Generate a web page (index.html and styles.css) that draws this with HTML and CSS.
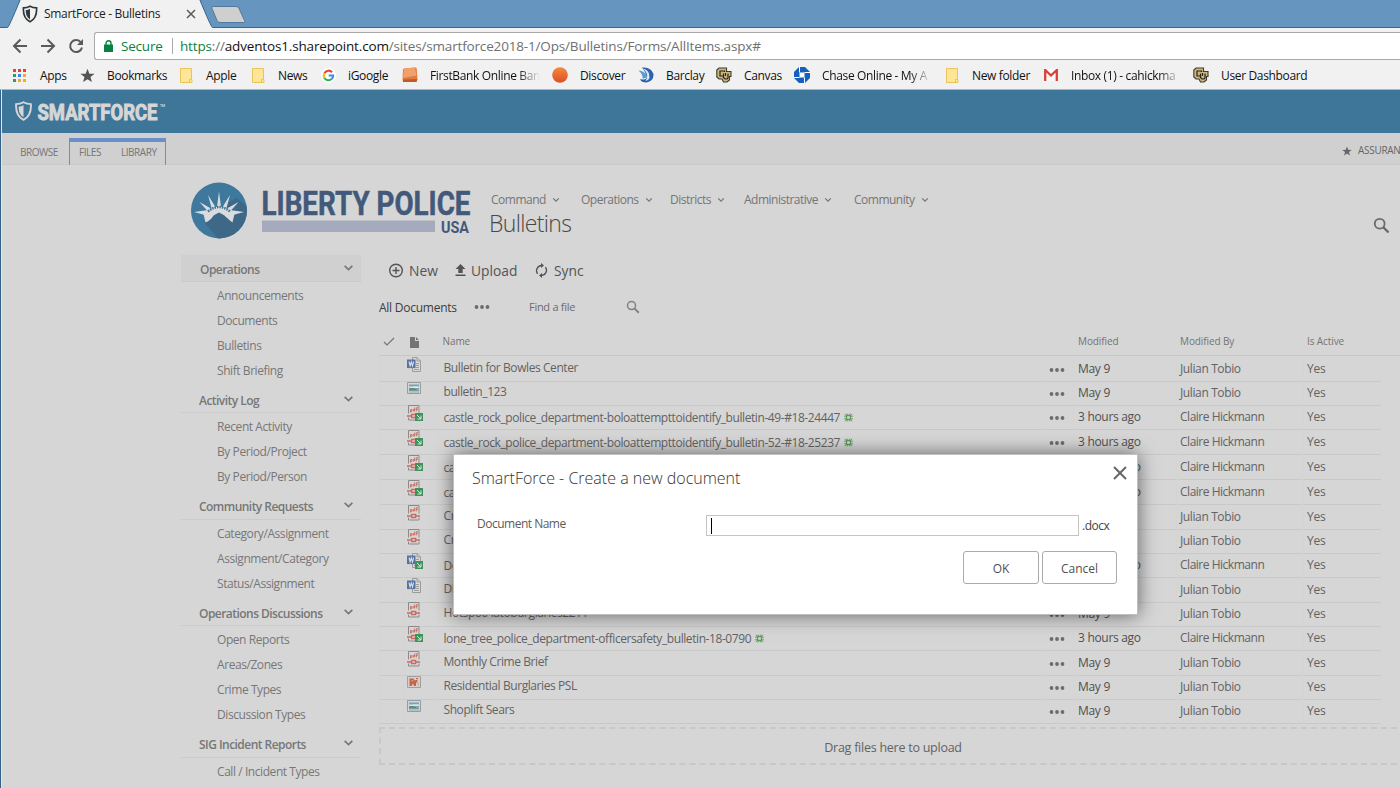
FILE: index.html
```html
<!DOCTYPE html>
<html lang="en">
<head>
<meta charset="utf-8">
<title>SmartForce - Bulletins</title>
<link rel="stylesheet" href="styles.css">
</head>
<body>
<svg class="defs" width="0" height="0" aria-hidden="true">
  <symbol id="chev" viewBox="0 0 10 7"><path d="M1.500 1.500 5 5l3.500-3.500" fill="none" stroke="currentColor" stroke-width="1.500"/></symbol>
  <symbol id="star" viewBox="0 0 16 16"><path d="M8 .8l2 5.200 5.600.2-4.400 3.400L12.700 15 8 11.900 3.300 15l1.500-5.400L.4 6.200 6 6z" fill="currentColor"/></symbol>
  <symbol id="shield" viewBox="0 0 18 20"><path d="M9 1.200c2.300 1.400 4.600 1.900 7.400 1.900.5 8-1.600 12.700-7.400 15.700C3.200 15.800 1.100 11.100 1.600 3.100 4.400 3.100 6.700 2.600 9 1.200z" fill="none" stroke="currentColor" stroke-width="1.900"/><path d="M9 4v12.200C5.400 13.800 4 10.600 4.200 5.600 6.100 5.500 7.600 5 9 4z" fill="currentColor"/></symbol>
  <symbol id="search" viewBox="0 0 16 16"><circle cx="6.300" cy="6.300" r="4.600" fill="none" stroke="currentColor" stroke-width="1.700"/><path d="M9.600 9.600l5 5" stroke="currentColor" stroke-width="2.200"/></symbol>
  <symbol id="dots" viewBox="0 0 16 6"><circle cx="2.500" cy="3" r="1.900" fill="currentColor"/><circle cx="8" cy="3" r="1.900" fill="currentColor"/><circle cx="13.500" cy="3" r="1.900" fill="currentColor"/></symbol>
  <symbol id="folder" viewBox="0 0 13 15"><path d="M.5.500h11v11h.5v3H.5z" fill="#ffe596" stroke="#e8c55b"/><path d="M9.500 14.500v-3h2" fill="none" stroke="#e8c55b"/></symbol>
  <symbol id="cu" viewBox="0 0 16 16"><path d="M3 1h7.500v3.500H15v5h-1.500V13L11 15H7.500L6 12H3L.8 10V3z" fill="#cdb87c" stroke="#3b3a36" stroke-width="1.100"/><path d="M8.500 5V4H4v5h3M7.500 6.500v4L9 12h2l1-1V6.500M9.500 6v3" fill="none" stroke="#24221f" stroke-width="1.200"/></symbol>
  <symbol id="word" viewBox="0 0 16 17"><path d="M5.500 1.500H10l3.500 3.500V15.500h-8z" fill="#dadada" stroke="#9a9b9b"/><path d="M10 1.500v3.500h3.500M9 7.500h3M9 9.500h3M9 11.500h3M7 13.500h5" fill="none" stroke="#9a9b9b"/><path d="M0 3.500h8.500v8.600H0z" fill="#5572a2"/><path d="M2 5.500l1.100 4.500L4.300 6l1.200 4L6.600 5.500" fill="none" stroke="#d7dce5" stroke-width="1.100"/></symbol>
  <symbol id="pic" viewBox="0 0 16 17"><path d="M.5 2.500h13v11H.5z" fill="#d3d6d8" stroke="#979ca0"/><path d="M2 4.500h10v5H2z" fill="#7da0b4"/><path d="M2 9.500c2-3.500 4-2.500 6-.8 1.500 1 3 1 4 1v1H2z" fill="#5c8f7c"/><path d="M2 6.500c3 .5 4-1 10 0v1.500c-4-.4-6 .5-10-.2z" fill="#dfe5e8"/><path d="M2 12h10" stroke="#a0a5a8"/></symbol>
  <symbol id="pdf" viewBox="0 0 16 17"><path d="M1.500 9.500V1.500h10.500v8M1.500 13.500v2.500h10.500v-2.500" fill="none" stroke="#8a8a8a"/><path d="M3.500 8.500v-3h1.300v2H3M7.700 3.500V7H6.100V5.500h1.600M9.300 7.500V3.700H11M9 5.300h2" fill="none" stroke="#cf7266" stroke-width="1"/><path d="M0 12h4M9 12h4M4.600 10.500h4v3h-4z" fill="none" stroke="#cc6a5e" stroke-width="1.400"/></symbol>
  <symbol id="ppt" viewBox="0 0 16 17"><path d="M.5 2.500h13v11H.5z" fill="#d6d0cc" stroke="#a0a0a0"/><path d="M2.500 12V4.500h4l1 2 3-1v2L9 9v3H7L6 9.500 4.500 12zM9 4h2v1H9z" fill="#c8624a"/><path d="M4.500 6h1.500v1.500H4.500zM10 8.500h1.500V10H10zM11 10.500h1V12h-1z" fill="#dca06a"/></symbol>
  <symbol id="out" viewBox="0 0 8 8"><path d="M0 0h8v8H0z" fill="#3f9259"/><path d="M2 2l3.800 3.800M6 2.500V6H2.500" fill="none" stroke="#dcebe0"/></symbol>
  <symbol id="new" viewBox="0 0 9 9"><path d="M.8.800l2 2M8.200.800l-2 2M.8 8.200l2-2M8.200 8.200l-2-2M0 3.200h2M0 5.800h2M7 3.200h2M7 5.800h2M3.200.500v2M5.800.500v2M3.200 6.500v2M5.800 6.500v2" stroke="#6aa566" stroke-width="1"/><path d="M2.500 2.500h4v4h-4z" fill="none" stroke="#5c9a58" stroke-width="1.300"/></symbol>
</svg>

<div class="window">
  <header class="chrome">
    <div class="tabstrip">
      <svg class="tabshape" width="250" height="28" viewBox="0 0 250 28"><path d="M0 28V27.500H7.500Q9 27 20.500-1H199.500Q211 27 212.500 27.500H250V28z" fill="#f1f1f1"/><path d="M0 27.500H7.500Q9 27 20.500-1M199.500-1Q211 27 212.500 27.500H250" fill="none" stroke="#3b648a"/><path d="M213 6.500h23q2 0 3 2l5.500 12q1 2-1 2H220q-2 0-3-2l-5-12q-1-2 1-2z" fill="#cfcfcf" stroke="#54789a"/></svg>
      <div class="tab">
        <svg class="fav" width="16" height="18"><use href="#shield"/></svg>
        <span class="tab-title">SmartForce - Bulletins</span>
        <svg width="10" height="10" viewBox="0 0 10 10"><path d="M1 1l8 8M9 1L1 9" stroke="#5a5a5a" stroke-width="1.500"/></svg>
      </div>
    </div>
    <div class="toolbar">
      <svg width="72" height="16" viewBox="0 0 72 16" fill="none" stroke="#5a5a5a" stroke-width="2"><path d="M15 8H2M8.500 1.500L2 8l6.500 6.500M29 8H42M35.500 1.500L42 8l-6.500 6.500"/><path d="M69 4.500A6 6 0 1 0 70 9.500"/><path d="M71 1v6h-6z" fill="#5a5a5a" stroke="none"/></svg>
      <div class="address">
        <svg width="9" height="12" viewBox="0 0 9 12"><path d="M0 4.500h9V12H0z" fill="#0b8043"/><path d="M2 5V3.200a2.500 2.500 0 0 1 5 0V5" fill="none" stroke="#0b8043" stroke-width="1.400"/></svg>
        <span class="secure">Secure</span>
        <span class="url"><b>https</b><i>://</i>adventos1.sharepoint.com<i>/sites/smartforce2018-1/Ops/Bulletins/Forms/AllItems.aspx#</i></span>
      </div>
    </div>
    <nav class="bookmarks">
      <div class="bm w67"><svg width="13" height="13" viewBox="0 0 13 13"><path d="M0 0h3v3H0zM5 0h3v3H5zM10 0h3v3h-3z" fill="#ea3f34"/><path d="M0 5h3v3H0z" fill="#2ba05a"/><path d="M5 5h3v3H5z" fill="#3f83ee"/><path d="M10 5h3v3h-3zM5 10h3v3H5zM10 10h3v3h-3z" fill="#f4ab24"/><path d="M0 10h3v3H0z" fill="#2ba05a"/></svg><span>Apps</span></div>
      <div class="bm w100"><svg class="dark" width="15" height="15"><use href="#star"/></svg><span>Bookmarks</span></div>
      <div class="bm w72 t26"><svg width="13" height="15"><use href="#folder"/></svg><span>Apple</span></div>
      <div class="bm w69 t26"><svg width="13" height="15"><use href="#folder"/></svg><span>News</span></div>
      <div class="bm w81"><svg width="15" height="15" viewBox="0 0 16 16"><circle cx="8" cy="8" r="8" fill="#fff"/><g fill="none" stroke-width="2.200"><path d="M11.800 4.500A5 5 0 0 0 3.600 5.600" stroke="#ea4335"/><path d="M3.600 5.600a5 5 0 0 0 .1 5" stroke="#fbbc05"/><path d="M3.700 10.600a5 5 0 0 0 7.600 1.200" stroke="#34a853"/><path d="M11.300 11.800A5 5 0 0 0 13 8H8.200" stroke="#4285f4"/></g></svg><span>iGoogle</span></div>
      <div class="bm w150 t28"><svg width="16" height="16" viewBox="0 0 16 16"><path d="M2 1.500L13 .5q1.500 0 1.700 1l.8 11-1 2.500H1L.5 12 1 2.500z" fill="#e47a3a"/><path d="M2 1.500l11-1 1.500 8L1 11z" fill="#efa06c"/><path d="M1 12.500l14-.5-.5 3H1z" fill="#bf5a27"/></svg><span class="fade f109">FirstBank Online Ban</span></div>
      <div class="bm w86 t28"><svg width="16" height="16"><defs><linearGradient id="sun" x1="0" y1="0" x2="0" y2="1"><stop offset="0" stop-color="#f28a3e"/><stop offset="1" stop-color="#dd4f25"/></linearGradient></defs><circle cx="8" cy="8" r="7.800" fill="url(#sun)"/></svg><span>Discover</span></div>
      <div class="bm w78 t28"><svg width="16" height="16" viewBox="0 0 16 16"><path d="M4 .5Q13-.5 15.500 7q.5 7-7 8.500Q3 15.500 2 12q5 1.500 6.500-1Q9 7 4 .5z" fill="#2b62ab"/><path d="M.5 3.500Q7 4 9 9.500 7.500 12 4.500 11.500 5 7.500.5 3.500z" fill="#5c9bd0"/><path d="M5 1.500Q12 3 11.500 11q-1 2.500-4 3 4.500-6-2.500-12.500z" fill="#dbe9f5"/></svg><span>Barclay</span></div>
      <div class="bm w78 t28"><svg width="16" height="16"><use href="#cu"/></svg><span>Canvas</span></div>
      <div class="bm w152 t28"><svg width="16" height="16" viewBox="0 0 16 16"><path d="M5 0h6l5 5v6l-5 5H5l-5-5V5z" fill="#1560bd"/><path d="M5.500 5.500h5v5h-5z" fill="#fff"/><path d="M5.500 0v5.500M16 5.500h-5.500M10.500 16v-5.500M0 10.500h5.500" stroke="#fff"/></svg><span class="fade f109">Chase Online - My A</span></div>
      <div class="bm w98 t26"><svg width="13" height="15"><use href="#folder"/></svg><span>New folder</span></div>
      <div class="bm w149"><svg width="14" height="12" viewBox="0 0 14 12"><path d="M0 0h14v12H0z" fill="#f8f8f8"/><path d="M1.200 12V1L7 6.500 12.800 1v11" fill="none" stroke="#d54338" stroke-width="2.300"/></svg><span class="fade f109">Inbox (1) - cahickma</span></div>
      <div class="bm w149 t28"><svg width="16" height="16"><use href="#cu"/></svg><span>User Dashboard</span></div>
    </nav>
  </header>

  <div class="page">
    <div class="suite">
      <svg width="160" height="24" viewBox="0 0 160 24"><use href="#shield" x="-1" y="2" width="19" height="20"/><text x="22.500" y="21" class="brand" textLength="120" lengthAdjust="spacingAndGlyphs">SMARTFORCE</text><text x="145" y="8" class="tm" textLength="5" lengthAdjust="spacingAndGlyphs">TM</text></svg>
    </div>
    <div class="ribbon">
      <span class="browse">BROWSE</span>
      <div class="ribbon-group"><span class="files">FILES</span><span>LIBRARY</span></div>
      <div class="promo"><svg width="10" height="10"><use href="#star"/></svg><span>ASSURAN</span></div>
    </div>

    <div class="masthead">
      <svg width="281" height="60" viewBox="0 0 281 60">
        <defs><clipPath id="disc"><circle cx="28" cy="28.500" r="28"/></clipPath></defs>
        <circle cx="28" cy="28.500" r="28" fill="#3e789c"/>
        <path clip-path="url(#disc)" d="M13 40L30 60 60 50V28L46 16 30 24 46 26 28 30z" fill="#3d6888"/>
        <g fill="#d9dcde"><path d="M26 25l2-15.500L30 25zM20.500 26L17 13 24.500 25zM35.500 26L39 13 31.500 25zM16.500 29L8.500 20l11.500 6.500zM39.500 29l8-9L36 26.500zM14 33L3 30l14-2zM42 33l11-3-14-2z"/><path d="M12.500 32Q28 17 43.500 32l-2 8.500Q36 36 33.500 33.500 31 32 28 30.500 25 32 22.500 33.500 20 38 14.500 40.500z"/></g>
        <path d="M17 29.500Q28 20.500 39 29.500" fill="none" stroke="#3e6f90" stroke-width="2.400" stroke-dasharray="1.500 1"/>
        <text x="70.500" y="33" class="city" textLength="209" lengthAdjust="spacingAndGlyphs">LIBERTY POLICE</text>
        <path d="M71 38.500h173v11.500H71z" fill="#a6aabd"/>
        <text x="250" y="50.500" class="usa" textLength="28" lengthAdjust="spacingAndGlyphs">USA</text>
      </svg>
      <div class="heading">
        <nav class="topnav">
          <a class="n1">Command<svg width="8" height="6"><use href="#chev"/></svg></a>
          <a class="n2">Operations<svg width="8" height="6"><use href="#chev"/></svg></a>
          <a class="n3">Districts<svg width="8" height="6"><use href="#chev"/></svg></a>
          <a class="n4">Administrative<svg width="8" height="6"><use href="#chev"/></svg></a>
          <a>Community<svg width="8" height="6"><use href="#chev"/></svg></a>
        </nav>
        <h1>Bulletins</h1>
      </div>
      <svg class="site-search" width="17" height="17"><use href="#search"/></svg>
    </div>

    <div class="columns">
      <aside class="side">
        <section class="current"><h2>Operations<svg width="11" height="8"><use href="#chev"/></svg></h2><a>Announcements</a><a>Documents</a><a>Bulletins</a><a>Shift Briefing</a></section>
        <section><h2>Activity Log<svg width="11" height="8"><use href="#chev"/></svg></h2><a>Recent Activity</a><a>By Period/Project</a><a>By Period/Person</a></section>
        <section><h2>Community Requests<svg width="11" height="8"><use href="#chev"/></svg></h2><a>Category/Assignment</a><a>Assignment/Category</a><a>Status/Assignment</a></section>
        <section><h2>Operations Discussions<svg width="11" height="8"><use href="#chev"/></svg></h2><a>Open Reports</a><a>Areas/Zones</a><a>Crime Types</a><a>Discussion Types</a></section>
        <section><h2>SIG Incident Reports<svg width="11" height="8"><use href="#chev"/></svg></h2><a>Call / Incident Types</a></section>
      </aside>

      <main class="main">
        <div class="actions">
          <span class="a1"><svg width="15" height="15" viewBox="0 0 15 15" fill="none" stroke="currentColor" stroke-width="1.400"><circle cx="7" cy="7.500" r="6.300"/><path d="M7 4v7M3.500 7.500h7"/></svg>New</span>
          <span class="a2"><svg width="11" height="13" viewBox="0 0 11 13" fill="currentColor"><path d="M5.500 0l5 5H7.700v4H3.300V5H.5zM.5 10.500h10V12H.5z"/></svg>Upload</span>
          <span class="a3"><svg width="13" height="15" viewBox="0 0 13 15" fill="none" stroke="currentColor" stroke-width="1.400"><path d="M2.600 10.800A5.200 5.200 0 0 1 6.500 2.500M10.400 4.200a5.200 5.200 0 0 1-3.900 8.300"/><path d="M6 0l3 2.500L6 5zM7 10l-3 2.500L7 15z" fill="currentColor" stroke="none"/></svg>Sync</span>
        </div>
        <div class="views">
          <span class="all">All Documents</span><svg width="16" height="6"><use href="#dots"/></svg>
          <span class="find">Find a file</span><svg class="find-icon" width="14" height="14"><use href="#search"/></svg>
        </div>
        <div class="row thead"><span class="c-check"><svg width="12" height="9" viewBox="0 0 12 9"><path d="M1 5l3 3 7-7" fill="none" stroke="currentColor" stroke-width="1.200"/></svg></span><span class="c-icon"><svg width="9" height="11" viewBox="0 0 9 11"><path d="M0 0h5v4h4v7H0zM6 0l3 3H6z" fill="currentColor"/></svg></span><span class="c-name">Name</span><span class="c-dots"></span><span class="c-mod">Modified</span><span class="c-by">Modified By</span><span class="c-act">Is Active</span></div>
        <div class="row"><span class="c-check"></span><span class="c-icon"><svg width="16" height="17"><use href="#word"/></svg></span><span class="c-name">Bulletin for Bowles Center</span><span class="c-dots"><svg width="16" height="6"><use href="#dots"/></svg></span><span class="c-mod">May 9</span><span class="c-by">Julian Tobio</span><span class="c-act">Yes</span></div>
        <div class="row"><span class="c-check"></span><span class="c-icon"><svg width="16" height="17"><use href="#pic"/></svg></span><span class="c-name">bulletin_123</span><span class="c-dots"><svg width="16" height="6"><use href="#dots"/></svg></span><span class="c-mod">May 9</span><span class="c-by">Julian Tobio</span><span class="c-act">Yes</span></div>
        <div class="row tall"><span class="c-check"></span><span class="c-icon"><svg width="16" height="17"><use href="#pdf"/><use href="#out" x="8" y="9" width="8" height="8"/></svg></span><span class="c-name">castle_rock_police_department-boloattempttoidentify_bulletin-49-#18-24447<svg width="9" height="9"><use href="#new"/></svg></span><span class="c-dots"><svg width="16" height="6"><use href="#dots"/></svg></span><span class="c-mod">3 hours ago</span><span class="c-by">Claire Hickmann</span><span class="c-act">Yes</span></div>
        <div class="row tall"><span class="c-check"></span><span class="c-icon"><svg width="16" height="17"><use href="#pdf"/><use href="#out" x="8" y="9" width="8" height="8"/></svg></span><span class="c-name">castle_rock_police_department-boloattempttoidentify_bulletin-52-#18-25237<svg width="9" height="9"><use href="#new"/></svg></span><span class="c-dots"><svg width="16" height="6"><use href="#dots"/></svg></span><span class="c-mod">3 hours ago</span><span class="c-by">Claire Hickmann</span><span class="c-act">Yes</span></div>
        <div class="row tall"><span class="c-check"></span><span class="c-icon"><svg width="16" height="17"><use href="#pdf"/><use href="#out" x="8" y="9" width="8" height="8"/></svg></span><span class="c-name">ca</span><span class="c-dots"></span><span class="c-mod">3 hours ago</span><span class="c-by">Claire Hickmann</span><span class="c-act">Yes</span></div>
        <div class="row tall"><span class="c-check"></span><span class="c-icon"><svg width="16" height="17"><use href="#pdf"/><use href="#out" x="8" y="9" width="8" height="8"/></svg></span><span class="c-name">ca</span><span class="c-dots"></span><span class="c-mod">3 hours ago</span><span class="c-by">Claire Hickmann</span><span class="c-act">Yes</span></div>
        <div class="row"><span class="c-check"></span><span class="c-icon"><svg width="16" height="17"><use href="#pdf"/></svg></span><span class="c-name">Cr</span><span class="c-dots"></span><span class="c-mod"></span><span class="c-by">Julian Tobio</span><span class="c-act">Yes</span></div>
        <div class="row"><span class="c-check"></span><span class="c-icon"><svg width="16" height="17"><use href="#pdf"/></svg></span><span class="c-name">Cr</span><span class="c-dots"></span><span class="c-mod"></span><span class="c-by">Julian Tobio</span><span class="c-act">Yes</span></div>
        <div class="row tall"><span class="c-check"></span><span class="c-icon"><svg width="16" height="17"><use href="#word"/><use href="#out" x="8" y="9" width="8" height="8"/></svg></span><span class="c-name">Do</span><span class="c-dots"></span><span class="c-mod">3 hours ago</span><span class="c-by">Claire Hickmann</span><span class="c-act">Yes</span></div>
        <div class="row"><span class="c-check"></span><span class="c-icon"><svg width="16" height="17"><use href="#word"/></svg></span><span class="c-name">Di</span><span class="c-dots"></span><span class="c-mod"></span><span class="c-by">Julian Tobio</span><span class="c-act">Yes</span></div>
        <div class="row"><span class="c-check"></span><span class="c-icon"><svg width="16" height="17"><use href="#pdf"/></svg></span><span class="c-name">HotspotAutoburglaries2211</span><span class="c-dots"><svg width="16" height="6"><use href="#dots"/></svg></span><span class="c-mod">May 9</span><span class="c-by">Julian Tobio</span><span class="c-act">Yes</span></div>
        <div class="row tall"><span class="c-check"></span><span class="c-icon"><svg width="16" height="17"><use href="#pdf"/><use href="#out" x="8" y="9" width="8" height="8"/></svg></span><span class="c-name">lone_tree_police_department-officersafety_bulletin-18-0790<svg width="9" height="9"><use href="#new"/></svg></span><span class="c-dots"><svg width="16" height="6"><use href="#dots"/></svg></span><span class="c-mod">3 hours ago</span><span class="c-by">Claire Hickmann</span><span class="c-act">Yes</span></div>
        <div class="row"><span class="c-check"></span><span class="c-icon"><svg width="16" height="17"><use href="#pdf"/></svg></span><span class="c-name">Monthly Crime Brief</span><span class="c-dots"><svg width="16" height="6"><use href="#dots"/></svg></span><span class="c-mod">May 9</span><span class="c-by">Julian Tobio</span><span class="c-act">Yes</span></div>
        <div class="row"><span class="c-check"></span><span class="c-icon"><svg width="16" height="17"><use href="#ppt"/></svg></span><span class="c-name">Residential Burglaries PSL</span><span class="c-dots"><svg width="16" height="6"><use href="#dots"/></svg></span><span class="c-mod">May 9</span><span class="c-by">Julian Tobio</span><span class="c-act">Yes</span></div>
        <div class="row"><span class="c-check"></span><span class="c-icon"><svg width="16" height="17"><use href="#pic"/></svg></span><span class="c-name">Shoplift Sears</span><span class="c-dots"><svg width="16" height="6"><use href="#dots"/></svg></span><span class="c-mod">May 9</span><span class="c-by">Julian Tobio</span><span class="c-act">Yes</span></div>
        <div class="drop">Drag files here to upload</div>
      </main>
    </div>
  </div>
</div>

<div class="dialog" role="dialog">
  <div class="dialog-head"><h3>SmartForce - Create a new document</h3><svg width="14" height="14" viewBox="0 0 14 14"><path d="M1 1l12 12M13 1L1 13" stroke="#666" stroke-width="2"/></svg></div>
  <div class="field"><label>Document Name</label><div class="input"><span class="caret"></span></div><span class="ext">.docx</span></div>
  <div class="buttons"><button>OK</button><button class="cancel">Cancel</button></div>
</div>
</body>
</html>
```
FILE: styles.css
```css
* { box-sizing: border-box; }
body { margin: 0; width: 1400px; height: 788px; overflow: hidden; position: relative; font-family: "Open Sans", "Noto Sans", sans-serif; font-size: 12px; color: #636363; }
svg { flex: none; display: block; }
.defs { position: absolute; }
.window { height: 788px; overflow: hidden; }

/* browser frame */
.chrome { height: 90px; background: #f1f1f1; border-bottom: 1px solid #b5b5b5; }
.tabstrip { position: relative; height: 28px; background: #6696bf; }
.tabshape { position: absolute; left: 0; top: 0; }
.tabstrip::after { content: ""; position: absolute; left: 250px; right: 0; bottom: 0; height: 1px; background: #3b648a; }
.tab { position: relative; display: flex; align-items: center; height: 28px; padding-left: 22px; color: #222; }
.fav { color: #30383f; }
.tab-title { margin-left: 6px; width: 142px; letter-spacing: -.3px; line-height: 16px; }
.toolbar { display: flex; height: 34px; padding: 4px 0 2px 12px; align-items: center; }
.address { display: flex; align-items: center; margin-left: 10px; flex: 1; height: 28px; padding-left: 9px; background: #fff; border: 1px solid #aaa; border-right: 0; border-radius: 3px 0 0 3px; font-size: 13.500px; }
.secure { margin-left: 8px; color: #0b8043; width: 52px; border-right: 1px solid #aaa; line-height: 16px; letter-spacing: -.2px; }
.url { margin-left: 7px; color: #111; white-space: nowrap; letter-spacing: -.16px; }
.url b { color: #0b8043; font-weight: 400; }
.url i { color: #707070; font-style: normal; }
.bookmarks { display: flex; height: 26px; padding-left: 13px; color: #111; }
.bm { display: grid; grid-template-columns: 27px 1fr; align-items: center; flex: none; white-space: nowrap; letter-spacing: -.35px; }
.t26 { grid-template-columns: 26px 1fr; }
.t28 { grid-template-columns: 28px 1fr; }
.dark { color: #555; }
.w67 { width: 67px; } .w69 { width: 69px; } .w72 { width: 72px; } .w78 { width: 78px; } .w81 { width: 81px; }
.w86 { width: 86px; } .w98 { width: 98px; } .w100 { width: 100px; } .w149 { width: 149px; } .w150 { width: 150px; } .w152 { width: 152px; }
.fade { overflow: hidden; -webkit-mask-image: linear-gradient(to right, #000 80%, transparent); mask-image: linear-gradient(to right, #000 80%, transparent); }
.f109 { width: 110px; }

/* site */
.page { height: 698px; background: #d6d6d6; border-left: 1px solid #35628a; box-shadow: inset 1px 0 #dfe6ec; }
.suite { height: 43px; margin-left: 1px; background: #3d7698; color: #d6d6d6; padding: 9px 0 0 13px; }
.brand { font: 700 22.500px Roboto, sans-serif; fill: #d6d6d6; stroke: #d6d6d6; stroke-width: 1px; }
.tm { font: 700 4px Roboto, sans-serif; fill: #d6d6d6; }
.ribbon { display: flex; height: 32px; margin-left: 1px; padding: 5px 0 0 18px; background: #d0d0d0; border-bottom: 1px solid #cacaca; font-size: 10px; line-height: 29px; color: #757575; }
.browse { width: 49px; letter-spacing: -.5px; }
.ribbon-group { display: flex; width: 97px; height: 27px; padding-left: 9px; border: 1px solid #6b8fcb; border-top-width: 4px; border-bottom: 0; line-height: 21px; letter-spacing: -.45px; }
.files { width: 42px; }
.promo { margin-left: auto; width: 58px; display: flex; align-items: center; height: 25px; gap: 6px; letter-spacing: -.3px; overflow: hidden; color: #666; }
.masthead { display: flex; height: 90px; padding: 17px 9px 0 190px; }
.city { font: 700 32.500px Roboto, sans-serif; fill: #42597a; stroke: #42597a; stroke-width: .5px; }
.usa { font: 700 17px Roboto, sans-serif; fill: #42597a; }
.heading { margin-left: 17px; padding-top: 9px; width: 884px; }
.topnav { display: flex; height: 18px; padding-left: 2px; line-height: 18px; color: #757575; letter-spacing: -.5px; }
.topnav a { display: flex; align-items: center; gap: 6px; white-space: nowrap; }
.n1 { width: 90px; } .n2 { width: 89px; } .n3 { width: 74px; } .n4 { width: 110px; }
h1 { margin: 0; font-weight: 300; font-size: 23px; line-height: 28px; letter-spacing: -.65px; color: #484848; }
.site-search { margin-top: 35px; color: #6a6a6a; }
.columns { display: flex; padding-left: 180px; }
.side { width: 180px; flex: none; color: #777; }
.side section { padding-bottom: 3.400px; }
.side h2 { display: flex; justify-content: space-between; align-items: center; height: 27px; margin: 0 0 1px; padding: 2px 7px 0 18px; border-bottom: 1px solid #cbcbcb; font-size: 12px; font-weight: 600; letter-spacing: -.54px; }
.side h2 svg { margin-top: -3px; }
.current h2 { background: #d0d0d0; padding-left: 19px; }
.side a { display: block; height: 25px; line-height: 25px; padding-left: 36px; letter-spacing: -.43px; white-space: nowrap; }
.main { width: 1028px; flex: none; margin-left: 18px; }
.actions { display: flex; height: 31px; padding-left: 10px; font-size: 13.800px; color: #545454; align-items: center; }
.actions span { display: flex; align-items: center; gap: 5px; line-height: 18px; }
.actions .a1 { width: 66px; } .actions .a2 { width: 80px; } .actions .a3 { gap: 6px; }
.views { display: flex; align-items: center; height: 43px; padding-bottom: 1px; }
.views svg { color: #6c6c6c; }
.all { width: 95px; color: #3c3c3c; letter-spacing: -.25px; white-space: nowrap; }
.find { width: 97px; margin: -2px 0 0 39px; font-size: 11px; letter-spacing: -.28px; color: #6b6b6b; }
.views .find-icon { color: #808080; }
.row { display: grid; grid-template-columns: 24px 35px 604px 31px 103px 127px 78px; height: 24px; line-height: 24px; white-space: nowrap; letter-spacing: -.2px; }
.row > span { border-bottom: 1px solid #c9c9c9; border-left: 1px solid #d4d4d4; height: 100%; }
.c-icon { padding: 0 0 0 3px; }
.c-name { display: flex; align-items: center; gap: 4px; padding-left: 4.500px; padding-bottom: 2px; line-height: 21px; letter-spacing: -.42px; }
.tall { height: 25px; }
.tall .c-name { padding: 1px 0 0 4.500px; }
.c-dots { padding: 11px 0 0 6px; color: #6c6c6c; }
.c-mod, .c-by, .c-act { padding-left: 3px; padding-top: 1px; }
.row .c-mod { color: #505050; padding-left: 4px; letter-spacing: -.3px; }
.row .c-by { letter-spacing: -.38px; }
.tall .c-by { letter-spacing: -.48px; }
.thead { height: 27px; line-height: 25px; font-size: 10px; border-bottom: 1px solid #c7c7c7; }
.thead > span, .row.thead .c-mod, .row.thead .c-by { border: 0; color: #747474; letter-spacing: -.1px; padding-top: 0; }
.row.thead .c-mod, .row.thead .c-by, .thead .c-act { padding-left: 5px; }
.row.thead .c-by, .thead .c-act { padding-left: 4px; }
.thead .c-check { padding: 8px 0 0 4px; }
.thead .c-icon { padding: 8px 0 0 7px; }
.thead .c-name { line-height: 25px; padding-bottom: 2px; }
.drop { margin-top: 5px; height: 38px; border: 2px dashed #c8c8c8; text-align: center; line-height: 37px; font-size: 12.500px; letter-spacing: -.25px; }

/* dialog */
.dialog { position: absolute; left: 453px; top: 454px; width: 685px; height: 161px; background: #fff; border: 1px solid #c0c0c0; box-shadow: 0 0 18px rgba(0,0,0,.55); }
.dialog-head { display: flex; justify-content: space-between; padding: 11px 10px 0 18px; height: 60px; }
h3 { margin: 0; font-size: 16px; font-weight: 300; line-height: 24px; color: #333; }
.field { display: flex; height: 21px; padding-left: 23px; }
.field label { width: 229px; line-height: 18px; color: #5c5c5c; letter-spacing: -.5px; }
.input { width: 373px; height: 21px; border: 1px solid #c4c4c4; padding: 2px 4px; }
.caret { display: block; width: 1px; height: 16px; background: #000; }
.ext { margin-left: 3px; color: #444; line-height: 22px; letter-spacing: -.5px; }
.buttons { display: flex; gap: 3px; margin: 15px 0 0 509px; }
.buttons button { width: 76px; height: 33px; background: #fff; border: 1px solid #ababab; border-radius: 3px; font: 12px "Open Sans", sans-serif; color: #505050; padding: 2px 0 0; }
.buttons .cancel { width: 75px; }
```
